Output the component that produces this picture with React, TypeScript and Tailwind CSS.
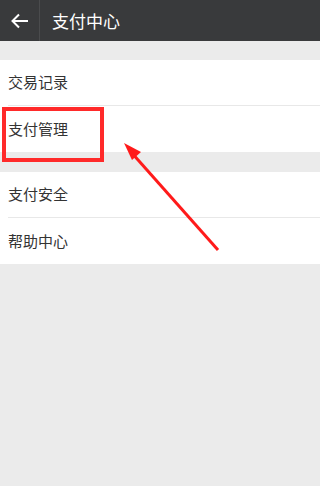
import { ReactNode } from "react";

const FONT = { fontFamily: '"Noto Sans CJK SC", "Noto Sans", sans-serif' };

function Row({ children, last }: { children: ReactNode; last?: boolean }) {
  return (
    <div className="bg-white pl-2">
      <div
        className={`h-[46px] flex items-center text-[15px] text-[#333] ${
          last ? "" : "border-b border-[#e8e8e8]"
        }`}
      >
        {children}
      </div>
    </div>
  );
}

export default function App() {
  return (
    <div className="relative w-[320px] h-[486px] bg-[#ebebeb] overflow-hidden" style={FONT}>
      <header className="h-[41px] bg-[#393a3c] flex items-center">
        <div className="w-[40px] h-full flex items-center justify-center border-r border-[#4a4b4d]">
          <svg width="18" height="16" viewBox="0 0 18 16" fill="none">
            <path d="M17 8H2M8 1.5L1.5 8L8 14.5" stroke="#fff" strokeWidth="2" />
          </svg>
        </div>
        <h1 className="ml-[12px] text-[17px] text-white">支付中心</h1>
      </header>

      <div className="mt-[19px]">
        <Row>交易记录</Row>
        <Row last>支付管理</Row>
      </div>
      <div className="mt-[20px]">
        <Row>支付安全</Row>
        <Row last>帮助中心</Row>
      </div>

      {/* annotation */}
      <div className="absolute left-[2px] top-[107px] w-[102px] h-[55px] border-[4px] border-[#ff2a2a]" />
      <svg className="absolute left-0 top-0" width="320" height="486" viewBox="0 0 320 486">
        <line x1="218" y1="250" x2="131" y2="152" stroke="#ff1a1a" strokeWidth="3" />
        <polygon points="124,143 141,152 132,160" fill="#ff1a1a" />
      </svg>
    </div>
  );
}
